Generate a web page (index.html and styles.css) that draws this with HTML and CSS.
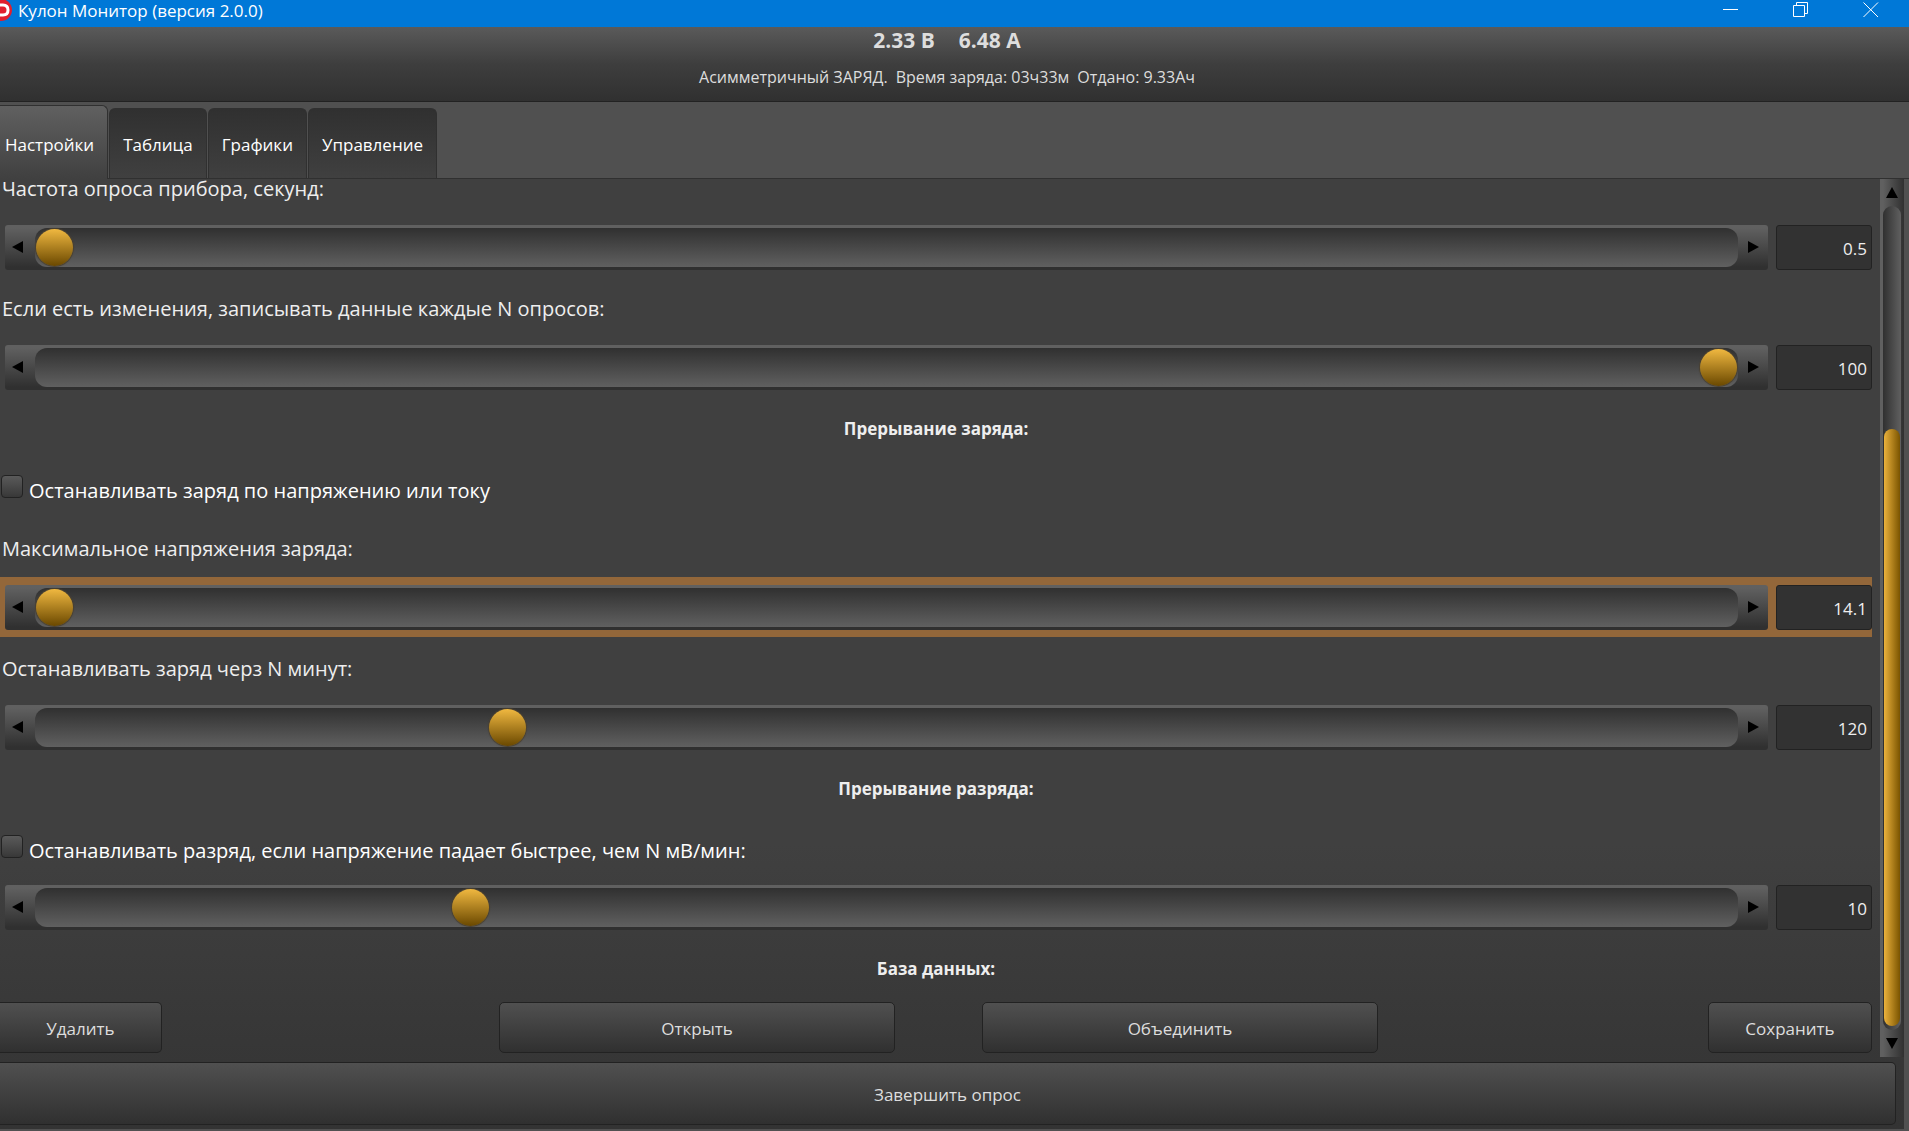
FILE: index.html
```html
<!DOCTYPE html>
<html lang="ru">
<head>
<meta charset="utf-8">
<title>Кулон Монитор (версия 2.0.0)</title>
<link rel="stylesheet" href="styles.css">
</head>
<body>
<div class="window">
  <header class="titlebar">
    <svg class="app-icon" width="12" height="22" viewBox="0 0 12 22" aria-hidden="true"><circle cx="1" cy="10" r="11" fill="#e0202e"/><path d="M-2 5H3Q8 5 8 10T3 15H-2Z" fill="#e0202e" stroke="#fff" stroke-width="3"/></svg>
    <h1 class="app-title">Кулон Монитор (версия 2.0.0)</h1>
    <div class="window-controls">
      <button type="button" class="window-button" aria-label="Свернуть"><svg width="16" height="16" viewBox="0 0 16 16"><path d="M0 7.500H15"/></svg></button>
      <button type="button" class="window-button" aria-label="Восстановить"><svg width="16" height="16" viewBox="0 0 16 16"><path d="M.5 3.500H11.500V14.500H.5ZM3.500 3.500V.5H14.500V11.500H11.500"/></svg></button>
      <button type="button" class="window-button" aria-label="Закрыть"><svg width="16" height="16" viewBox="0 0 16 16"><path d="M.5 .5L15 15M15 .5L.5 15"/></svg></button>
    </div>
  </header>

  <section class="status">
    <p class="readings"><span>2.33 В</span><span>6.48 А</span></p>
    <p class="summary"><span>Асимметричный ЗАРЯД.</span><span>Время заряда: 03ч33м</span><span>Отдано: 9.33Ач</span></p>
  </section>

  <nav class="tabs" role="tablist">
    <button type="button" class="tab tab-active" role="tab" aria-selected="true">Настройки</button>
    <button type="button" class="tab" role="tab" aria-selected="false">Таблица</button>
    <button type="button" class="tab" role="tab" aria-selected="false">Графики</button>
    <button type="button" class="tab" role="tab" aria-selected="false">Управление</button>
  </nav>

  <main class="panel">
    <div class="view">
      <div class="settings">
        <label class="row row-first" for="poll">Частота опроса прибора, секунд:</label>
        <div class="row slider-row">
          <div class="slider">
            <button type="button" class="step" aria-label="Меньше"><svg width="11" height="12" viewBox="0 0 11 12"><path d="M11 0V12L0 6Z"/></svg></button>
            <input type="range" class="range" id="poll" min="0.5" max="10" step="0.5" value="0.5">
            <button type="button" class="step step-up" aria-label="Больше"><svg width="11" height="12" viewBox="0 0 11 12"><path d="M0 0V12L11 6Z"/></svg></button>
          </div>
          <input type="text" class="value" aria-label="Частота опроса" value="0.5">
        </div>

        <label class="row" for="every">Если есть изменения, записывать данные каждые N опросов:</label>
        <div class="row slider-row">
          <div class="slider">
            <button type="button" class="step" aria-label="Меньше"><svg width="11" height="12" viewBox="0 0 11 12"><path d="M11 0V12L0 6Z"/></svg></button>
            <input type="range" class="range" id="every" min="1" max="100" value="100">
            <button type="button" class="step step-up" aria-label="Больше"><svg width="11" height="12" viewBox="0 0 11 12"><path d="M0 0V12L11 6Z"/></svg></button>
          </div>
          <input type="text" class="value" aria-label="Число опросов" value="100">
        </div>

        <h2 class="row heading">Прерывание заряда:</h2>
        <div class="row check-row">
          <input type="checkbox" class="check" id="stop-charge">
          <label for="stop-charge">Останавливать заряд по напряжению или току</label>
        </div>

        <label class="row" for="voltage">Максимальное напряжения заряда:</label>
        <div class="row slider-row slider-row-focused">
          <div class="slider">
            <button type="button" class="step" aria-label="Меньше"><svg width="11" height="12" viewBox="0 0 11 12"><path d="M11 0V12L0 6Z"/></svg></button>
            <input type="range" class="range" id="voltage" min="14.1" max="18.1" step="0.1" value="14.1">
            <button type="button" class="step step-up" aria-label="Больше"><svg width="11" height="12" viewBox="0 0 11 12"><path d="M0 0V12L11 6Z"/></svg></button>
          </div>
          <input type="text" class="value" aria-label="Напряжение" value="14.1">
        </div>

        <label class="row" for="minutes">Останавливать заряд черз N минут:</label>
        <div class="row slider-row">
          <div class="slider">
            <button type="button" class="step" aria-label="Меньше"><svg width="11" height="12" viewBox="0 0 11 12"><path d="M11 0V12L0 6Z"/></svg></button>
            <input type="range" class="range" id="minutes" min="0" max="441" value="120">
            <button type="button" class="step step-up" aria-label="Больше"><svg width="11" height="12" viewBox="0 0 11 12"><path d="M0 0V12L11 6Z"/></svg></button>
          </div>
          <input type="text" class="value" aria-label="Минуты" value="120">
        </div>

        <h2 class="row heading">Прерывание разряда:</h2>
        <div class="row check-row">
          <input type="checkbox" class="check" id="stop-discharge">
          <label for="stop-discharge">Останавливать разряд, если напряжение падает быстрее, чем N мВ/мин:</label>
        </div>
        <div class="row slider-row">
          <div class="slider">
            <button type="button" class="step" aria-label="Меньше"><svg width="11" height="12" viewBox="0 0 11 12"><path d="M11 0V12L0 6Z"/></svg></button>
            <input type="range" class="range" aria-label="мВ/мин" min="0" max="40" value="10">
            <button type="button" class="step step-up" aria-label="Больше"><svg width="11" height="12" viewBox="0 0 11 12"><path d="M0 0V12L11 6Z"/></svg></button>
          </div>
          <input type="text" class="value" aria-label="Скорость падения напряжения" value="10">
        </div>

        <h2 class="row heading">База данных:</h2>
        <div class="row database">
          <button type="button" class="button button-first">Удалить</button>
          <button type="button" class="button button-open">Открыть</button>
          <button type="button" class="button button-merge">Объединить</button>
          <button type="button" class="button button-save">Сохранить</button>
        </div>
      </div>

      <div class="scrollbar">
        <button type="button" class="scroll-step" aria-label="Вверх"><svg width="12" height="11" viewBox="0 0 12 11"><path d="M0 11H12L6 0Z"/></svg></button>
        <div class="scroll-track"><div class="scroll-thumb"></div></div>
        <button type="button" class="scroll-step" aria-label="Вниз"><svg width="12" height="11" viewBox="0 0 12 11"><path d="M0 0H12L6 11Z"/></svg></button>
      </div>
    </div>

    <footer class="footer">
      <button type="button" class="button button-finish">Завершить опрос</button>
    </footer>
  </main>
</div>
</body>
</html>
```
FILE: styles.css
```css
* {
  box-sizing: border-box;
}

body {
  margin: 0;
  background: #505050;
  color: #eee;
  font-family: "Open Sans", "Noto Sans", sans-serif;
  font-size: 20px;
}

h1, h2, p {
  margin: 0;
}

button, input {
  margin: 0;
  color: inherit;
  font-family: inherit;
}

button {
  padding: 0;
  border: 0;
}

svg {
  display: block;
}

.window {
  display: flex;
  flex-direction: column;
  min-height: 100vh;
}

/* Title bar */

.titlebar {
  display: flex;
  height: 27px;
  padding-right: 3px;
  background: #0078d7;
}

.app-title {
  flex: 1;
  padding-left: 6px;
  color: #fff;
  font-size: 17px;
  font-weight: 400;
  line-height: 22px;
}

.window-controls {
  display: flex;
}

.window-button {
  display: flex;
  justify-content: center;
  width: 70px;
  padding-top: 2px;
  background: none;
}

.window-button svg {
  fill: none;
  stroke: #fff;
}

/* Status */

.status {
  height: 75px;
  padding-right: 15px;
  border-bottom: 1px solid #222;
  background: linear-gradient(#5a5a5a, #3e3e3e 50%, #303030);
  color: #ddd;
}

.readings, .summary {
  display: flex;
  justify-content: center;
}

.readings {
  gap: 24px;
  font-size: 21px;
  font-weight: 700;
  line-height: 26px;
}

.summary {
  gap: 8px;
  padding-top: 11px;
  font-size: 16px;
  line-height: 26px;
}

/* Tabs */

.tabs {
  display: flex;
  align-items: flex-end;
  gap: 1px;
  height: 77px;
  border-bottom: 1px solid #303030;
  background: #505050;
}

.tab {
  height: 70px;
  padding: 2px 13px 0;
  border: 1px solid #303030;
  border-bottom: 0;
  border-radius: 6px 6px 0 0;
  background: linear-gradient(#303030, #404040);
  color: #fff;
  font-size: 17px;
}

.tab-active {
  height: 74px;
  margin-bottom: -1px;
  padding: 3px 13px 0 5px;
  border-left: 0;
  border-radius: 0 6px 0 0;
  background: linear-gradient(#606060, #404040);
}

/* Settings */

.panel {
  display: flex;
  flex: 1;
  flex-direction: column;
  margin: 0 5px 2px 0;
  background: linear-gradient(#404040 70%, #333);
}

.view {
  display: flex;
  flex: 1;
}

.settings {
  flex: 1;
  padding-right: 8px;
}

.row {
  display: flex;
  align-items: center;
  height: 60px;
  padding: 2px 2px 0;
}

.row-first {
  align-items: flex-start;
  height: 38px;
  padding-top: 0;
  line-height: 20px;
}

.heading {
  justify-content: center;
  font-size: 17px;
  font-weight: 700;
}

.check-row {
  gap: 6px;
  padding: 0 1px;
  color: #fff;
}

.check-row label {
  padding-top: 6px;
}

.check {
  appearance: none;
  width: 22px;
  height: 23px;
  margin-bottom: 2px;
  border: 1px solid #222;
  border-radius: 4px;
  background: linear-gradient(#5a5a5a, #383838);
}

.slider-row {
  gap: 8px;
  padding: 0 0 0 5px;
}

.slider-row-focused {
  background: #93673a;
}

.slider {
  display: flex;
  flex: 1;
  align-items: center;
  height: 45px;
  border-radius: 3px;
  background: linear-gradient(#606060 3px, #303030 42px);
}

.step {
  display: flex;
  align-items: center;
  width: 30px;
  height: 45px;
  padding-left: 7px;
  background: none;
}

.step-up {
  padding-left: 10px;
}

.range {
  appearance: none;
  flex: 1;
  min-width: 0;
  height: 39px;
  padding: 0 1px;
  border-radius: 12px;
  background: linear-gradient(#303030, #606060);
}

.range::-webkit-slider-thumb {
  appearance: none;
  width: 37px;
  height: 37px;
  border-radius: 50%;
  background: linear-gradient(#f0b840, #6a4800);
  box-shadow: 0 0 1px 1px #4a4030;
}

.value {
  width: 96px;
  height: 45px;
  padding: 2px 4px 0;
  border: 1px solid #222;
  border-radius: 3px;
  background: #323232;
  font-size: 17px;
  text-align: right;
}

/* Buttons */

.button {
  height: 51px;
  padding-top: 2px;
  border: 1px solid #222;
  border-radius: 5px;
  background: linear-gradient(#505050, #303030);
  color: #ddd;
  font-size: 17px;
}

.database {
  display: grid;
  grid-template-columns: 162px 337fr 396fr 87fr 396fr 330fr 164px;
  padding: 0;
}

.button-first {
  border-left: 0;
  border-radius: 0 5px 5px 0;
}

.button-open {
  grid-column: 3;
}

.button-merge {
  grid-column: 5;
}

.button-save {
  grid-column: 7;
}

.footer {
  padding: 5px 8px 4px 0;
}

.button-finish {
  display: block;
  width: 100%;
  height: 63px;
  border-left: 0;
  border-radius: 0 5px 5px 0;
}

/* Scrollbar */

.scrollbar {
  display: flex;
  flex-direction: column;
  width: 24px;
  background: linear-gradient(90deg, #606060 3px, #303030);
}

.scroll-step {
  display: flex;
  align-items: center;
  justify-content: center;
  height: 27px;
  background: none;
}

.scroll-track {
  display: grid;
  flex: 1;
  grid-template-rows: 27fr 73fr;
  margin: 0 3px;
  padding: 2px 1px 4px;
  border-radius: 9px;
  background: linear-gradient(90deg, #303030, #606060);
}

.scroll-thumb {
  grid-row: 2;
  border-radius: 8px;
  background: linear-gradient(90deg, #ecb23c, #7a5400);
}
```
